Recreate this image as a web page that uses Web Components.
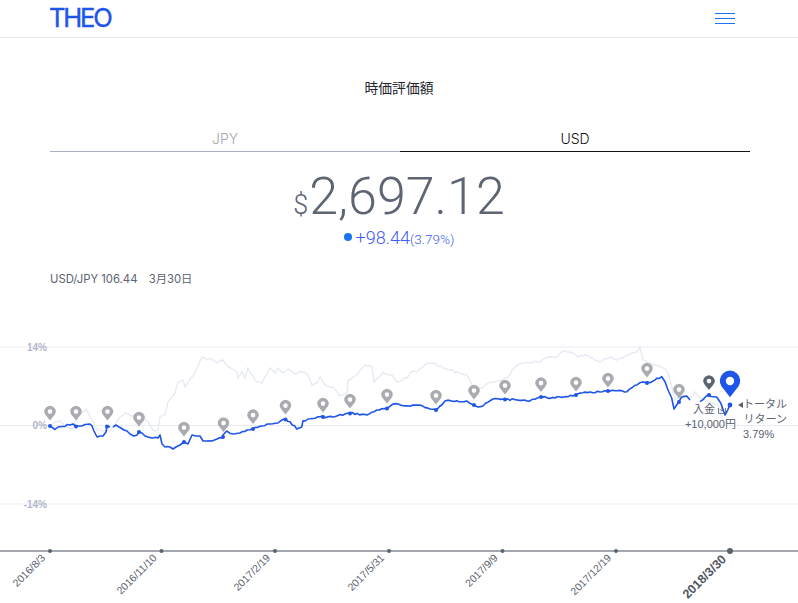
<!DOCTYPE html>
<html lang="ja"><head><meta charset="utf-8"><title>THEO</title>
<style>
html,body{margin:0;padding:0;background:#fff;overflow:hidden}
body{width:798px;height:603px;display:flex;flex-direction:column;font-family:"Inter","Liberation Sans","Noto Sans CJK JP",sans-serif}
</style></head><body>
<app-header></app-header>
<section-title>時価評価額</section-title>
<currency-tabs></currency-tabs>
<value-display></value-display>
<rate-note>USD/JPY 106.44　3月30日</rate-note>
<growth-chart></growth-chart>
<script>
function def(name,html,init){customElements.define(name,class extends HTMLElement{constructor(){super();this.attachShadow({mode:'open'}).innerHTML=html;}connectedCallback(){if(init)init(this.shadowRoot);}});}
def('app-header',`<style>
:host{display:flex;justify-content:space-between;align-items:center;box-sizing:border-box;height:38px;padding:0 63px 0 49px;border-bottom:1px solid #e8eaf2}
.logo{font:400 25.5px/38px "Inter","Liberation Sans",sans-serif;letter-spacing:-2.2px;color:#1f55e8;height:37px;margin-top:-2px;-webkit-text-stroke:.45px #1f55e8}
.menu{display:flex;flex-direction:column;gap:4px;width:20px}
.menu i{display:block;height:1px;background:#1a73f0}
</style><div class="logo">THEO</div><div class="menu"><i></i><i></i><i></i></div>`);
def('section-title',`<style>
:host{display:block;margin-top:39px;text-align:center;font:400 13.8px/20px "Noto Sans CJK JP",sans-serif;color:#23262e}
</style><slot></slot>`);
def('currency-tabs',`<style>
:host{display:flex;margin:32px 48px 0 50px;font:300 14px/20px "Inter","Liberation Sans",sans-serif}
div{flex:1;text-align:center;padding-bottom:2px;border-bottom:1.5px solid #a8b0bc;color:#a2a6ae}
div.on{border-color:#111;color:#111}
</style><div>JPY</div><div class="on">USD</div>`);
def('value-display',`<style>
:host{display:flex;flex-direction:column;align-items:center;margin-top:14px;font-family:Roboto,"Liberation Sans",sans-serif;font-weight:300;color:#5e6572}
.big{display:flex;align-items:baseline;font-size:52px;line-height:62px}
.cur{font-size:27px;margin-right:1px}
.chg{display:flex;align-items:baseline;color:#3f5df5;font-size:18px;line-height:22px;margin-top:-9px}
.dot{width:8px;height:8px;border-radius:50%;background:#1a73f0;margin-right:4px;align-self:center;margin-top:-4px}
small{font-size:13.5px}
</style><div class="big"><span class="cur">$</span>2,697.12</div><div class="chg"><span class="dot"></span>+98.44<small>(3.79%)</small></div>`);
def('rate-note',`<style>
:host{display:block;margin:21px 0 0 50px;font:400 11.3px/16px "Inter","Liberation Sans","Noto Sans CJK JP",sans-serif;color:#5b6270}
</style><slot></slot>`);
const BLUE=[[50,426],[53,428],[55,429.5],[58,427],[62,426.5],[65,426.5],[67,424.5],[70,425],[73,424],[75,425.5],[78,426],[82,426],[85,424.5],[90,424],[92,426],[94,431],[97,437],[100,436],[103,436],[106,432],[107,426],[110,427],null,[113,427],[116,425],[119,427],[121,428],[124,430],[127,431],[130,434],[134,436],[137,435],[139,432],[142,433],[145,436],[148,437],[153,438],[158,438],[160,435],[162,444],[165,447],[170,447],[173,449],[176,447],[180,445],[184,442],[188,444],[192,435],[196,436],[200,436],[203,441],[207,441],[212,441],[217,439],[222,438],[223,435],[226.7,431],[233,434],[240,433],[247,430],[253,429],[262,426],[270,424],[278,423],[285,419],[290,421.7],[296.7,429],[301.7,427],[303,420.7],[320,416.7],[333,417],[350,413],[366.7,415],[376.7,410],[386.7,408.7],[393,404],[403,405.7],[420,405],[430,409],[436.7,410],[445,401],[456.7,400.7],[466.7,401],[473,404.7],[478,407],[483,406],[493,399],[503,399],[517,400],[527,401],[540,397],[555,398],[575,395],[590,392],[600,392],[617,390.7],[627,391.7],[640,382.7],[650,382.7],[661.7,376.7],[665,381.7],[668,390],[671.7,398],[674,409],[678,403],[681.7,397],[686.7,396],[690,400],null,[700,401.7],[708,395],[716.7,397],[720.7,403],[725,415],[730,405]];
const LIGHT=[[50,426],[55,422],[60,420.7],[65,426.7],[72,429],[78,417],[86,409],[92,420],[97,430],[110,431],[115,425],[120,417],[125,413],[132,416],[143,415],[153,430],[158,430],[160,417],[165,415],[168,402],[175,393],[178,382],[183,380],[185,387],[192,377],[197,368],[202,357],[207,360],[210,358],[217,363],[223,360],[228,367],[237,372],[238,378],[242,372],[245,378],[248,368],[255,380],[262,383],[270,368],[275,373],[278,368],[283,373],[288,369],[295,374],[302,372],[308,375],[312,385],[317,383],[320,377],[325,385],[333,387],[340,396],[347,393],[348,380],[357,375],[365,365],[372,367],[374,382],[383,372],[392,375],[397,382],[407,378],[412,371],[417,372],[427,363],[433,363],[443,368],[457,372],[467,375],[473,387],[480,388],[493,382],[507,378],[515,367],[527,362],[540,362],[548,357],[556,358],[563,351],[570,352],[578,357],[585,355],[595,360],[600,362],[610,357],[617,360],[627,355],[637,352],[640,347],[643,360],[653,365],[663,368],[668,373],[672,388],[675,400],[680,397],[690,398],[695,392],[700,398],[710,402],[718,405],[723,420],[728,423]];
function jag(pts,amp){let s=7,d='',pen=false;const r=()=>{s=(s*9301+49297)%233280;return s/233280-.5;};
 for(let i=0;i<pts.length;i++){const p=pts[i];if(!p){pen=false;continue;}
  if(!pen){d+='M'+p[0]+' '+p[1];pen=true;continue;}
  const q=pts[i-1];if(q){const n=Math.floor((p[0]-q[0])/2.2);for(let k=1;k<n;k++){const t=k/n;d+='L'+(q[0]+(p[0]-q[0])*t).toFixed(1)+' '+(q[1]+(p[1]-q[1])*t+r()*amp).toFixed(1);}}
  d+='L'+p[0]+' '+p[1];}
 return d;}
function pin(x,y,c,s=1){return `<g transform="translate(${x} ${y}) scale(${s})"><path fill="${c}" fill-rule="evenodd" d="M0 8.6L-4.6 2.7A5.6 5.6 0 1 1 4.6 2.7ZM0-2.7A2.3 2.3 0 1 0 0 1.9 2.3 2.3 0 0 0 0-2.7Z"/></g>`;}
const PINS=[[50,412],[76,412],[107.5,412],[139,418],[184,428],[223.5,423.5],[253,415.5],[285.5,406],[323,404],[350,400],[387,395],[436,396],[474,391],[505,386],[541,383.5],[576,383],[608,379],[647,369],[679,390]];
const DOTS=[[50,426],[76,426.5],[107,426.5],[139,432],[184,442],[223,437],[253,429],[285.5,419.5],[323,417],[350,413.5],[387,408.5],[436,410],[474,405],[505,399.5],[541,397],[576,395],[608,391],[647,383],[679,402],[709,395]];
const TICKS=[[50,'2016/8/3'],[161.5,'2016/11/10'],[275,'2017/2/19'],[389,'2017/5/31'],[502.5,'2017/9/9'],[616,'2017/12/19']];
def('growth-chart',`<style>
:host{display:block;margin-top:auto;height:273px;flex:none}
svg{display:block;width:798px;height:273px;font-family:"Liberation Sans","Noto Sans CJK JP",sans-serif}
.y{font-size:10px;font-weight:700;fill:#b0b6c8;text-anchor:end}
.x{font-size:10.5px;fill:#5b6270;text-anchor:end}
.n{font-size:11px;fill:#5b6270}
</style><svg viewBox="0 330 798 273" id="s"></svg>`,root=>{
 let h='';
 [347,425.5,504].forEach(y=>h+=`<path d="M0 ${y}H798" stroke="#e9ebf1" stroke-width="1"/>`);
 h+=`<text class="y" x="47" y="351">14%</text><text class="y" x="47" y="429">0%</text><text class="y" x="47" y="508">-14%</text>`;
 h+=`<path d="${jag(LIGHT,2.2)}" fill="none" stroke="#e6eaf4" stroke-width="1.4"/>`;
 h+=`<path d="${jag(BLUE,1.9)}" fill="none" stroke="#1f55e8" stroke-width="1.6" stroke-linejoin="round"/>`;
 DOTS.forEach(d=>h+=`<circle cx="${d[0]}" cy="${d[1]}" r="2" fill="#1f55e8"/>`);
 PINS.forEach(p=>h+=pin(p[0],p[1],'#a9abb0'));
 h+=pin(709,381.5,'#5b6270');
 h+=pin(730,381.7,'#1f55e8',1.82);
 h+=`<circle cx="730" cy="405" r="2.4" fill="#1f55e8"/>`;
 h+=`<path d="M0 551H798" stroke="#a4a7ae" stroke-width="2"/>`;
 TICKS.forEach(t=>{h+=`<circle cx="${t[0]}" cy="551" r="2" fill="#5b6270"/><text class="x" transform="translate(${t[0]-4} 558.5) rotate(-45)">${t[1]}</text>`;});
 h+=`<circle cx="730" cy="551" r="3" fill="#5b6270"/><text class="x" style="font-size:12.5px;font-weight:700;fill:#50555f" transform="translate(727 560) rotate(-45)">2018/3/30</text>`;
 h+=`<text class="n" x="693" y="413">入金</text>`;
 h+=`<path d="M718.5 408V413.5H725.5V408M722 405V411M720 409.2L722 411.2L724 409.2" fill="none" stroke="#5b6270" stroke-width=".8"/>`;
 h+=`<text class="n" x="736" y="428" text-anchor="end">+10,000円</text>`;
 h+=`<path d="M738 405L743 402V408Z" fill="#5b6270"/>`;
 h+=`<text class="n" x="787" y="408" text-anchor="end">トータル</text><text class="n" x="787" y="423" text-anchor="end">リターン</text><text class="n" x="743" y="438">3.79%</text>`;
 root.getElementById('s').innerHTML=h;
});
</script></body></html>
